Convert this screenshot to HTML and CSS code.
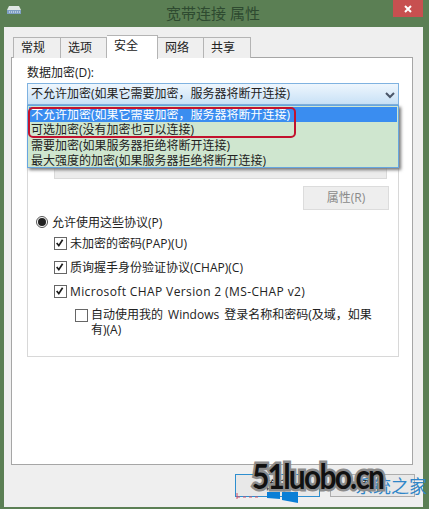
FILE: index.html
```html
<!DOCTYPE html>
<html lang="zh-CN">
<head>
    <meta charset="UTF-8">
    <title>宽带连接 属性</title>
    <link rel="stylesheet" href="styles.css">
</head>
<body>
<div class="window">
    <div class="titlebar">
        <svg class="app_icon" width="16" height="10" viewBox="0 0 16 10">
            <path d="M3 1h10l2 4H1z" fill="#dfe8e4"/>
            <rect x="1" y="5" width="14" height="4" fill="#7f9fc4"/>
            <path d="M3 7h1M5 7h1M7 7h1M9 7h1M11 7h1M13 7h1" stroke="#f4f6f8" stroke-width="1"/>
        </svg>
        <div class="title">宽带连接 属性</div>
        <div class="close">
            <svg width="10" height="10" viewBox="0 0 10 10"><path d="M2 2l6 6M8 2l-6 6" stroke="#fff" stroke-width="2"/></svg>
        </div>
    </div>
    <div class="client">
        <ul class="tab">
            <li class="w48">常规</li>
            <li class="w46">选项</li>
            <li class="active">安全</li>
            <li class="w46">网络</li>
            <li class="w47">共享</li>
        </ul>
        <div class="panel">
            <div class="label">数据加密(D):</div>
            <div class="select">
                <span>不允许加密(如果它需要加密，服务器将断开连接)</span>
                <svg class="chevron" width="10" height="7" viewBox="0 0 10 7"><path d="M1 1l4 4 4-4" fill="none" stroke="#4a5668" stroke-width="2"/></svg>
                <ul class="droplist">
                    <li class="on">不允许加密(如果它需要加密，服务器将断开连接)</li>
                    <li>可选加密(没有加密也可以连接)</li>
                    <li>需要加密(如果服务器拒绝将断开连接)</li>
                    <li>最大强度的加密(如果服务器拒绝将断开连接)</li>
                    <li class="ring"></li>
                </ul>
            </div>
            <div class="group">
                <div class="select_off"></div>
                <div class="btn_row"><div class="btn_off">属性(R)</div></div>
                <div class="radio_row">
                    <span class="radio"><i></i></span>
                    <span>允许使用这些协议(P)</span>
                </div>
                <div class="check_row">
                    <svg class="check" width="13" height="13" viewBox="0 0 13 13"><path d="M2 6l2.5 3L9 2" fill="none" stroke="#1c1c1c" stroke-width="2"/></svg>
                    <span>未加密的密码(PAP)(U)</span>
                </div>
                <div class="check_row">
                    <svg class="check" width="13" height="13" viewBox="0 0 13 13"><path d="M2 6l2.5 3L9 2" fill="none" stroke="#1c1c1c" stroke-width="2"/></svg>
                    <span>质询握手身份验证协议(CHAP)(C)</span>
                </div>
                <div class="check_row">
                    <svg class="check" width="13" height="13" viewBox="0 0 13 13"><path d="M2 6l2.5 3L9 2" fill="none" stroke="#1c1c1c" stroke-width="2"/></svg>
                    <span class="latin">Microsoft CHAP Version 2 (MS-CHAP v2)</span>
                </div>
                <div class="check_row sub">
                    <span class="check"></span>
                    <span class="sub_text">自动使用我的 Windows 登录名称和密码(及域，如果有)(A)</span>
                </div>
            </div>
        </div>
        <div class="footer">
            <div class="btn primary">确定</div>
            <div class="btn">取消</div>
        </div>
    </div>
    <div class="site_mark">系统之家</div>
    <svg class="win_logo" width="32" height="12" viewBox="0 0 32 12">
        <path d="M0 0h13v7l-13-1z" fill="#0a7fd6"/>
        <path d="M15 0h16v11l-16-3z" fill="#0a7fd6"/>
    </svg>
    <svg class="red_marks" width="24" height="7" viewBox="0 0 24 7">
        <path d="M1 0v6M1 4h3M7 4h3M13 4h3M19 4h3" fill="none" stroke="#d0506a" stroke-width="1"/>
    </svg>
    <div class="watermark">51luobo.cn</div>
</div>
</body>
</html>
```

FILE: styles.css
```css
* {
    margin: 0;
    padding: 0;
    box-sizing: border-box;
}
ul, li {
    list-style: none;
}
body {
    width: 429px;
    height: 509px;
    overflow: hidden;
    background: #5b7f54;
    font-family: "Open Sans", "Noto Sans CJK SC", sans-serif;
    font-size: 12px;
    color: #222;
}
.latin {
    letter-spacing: .38px;
}
.window {
    position: relative;
    height: 509px;
    padding: 0 6px 2px 4px;
    display: flex;
    flex-direction: column;
}
.titlebar {
    height: 27px;
    flex: none;
    display: flex;
    position: relative;
}
.app_icon {
    margin: 5px 0 0 2px;
}
.title {
    position: absolute;
    left: 162px;
    top: 3px;
    font-size: 15px;
    line-height: 20px;
    color: #2e4a30;
}
.close {
    position: absolute;
    right: 0;
    top: 0;
    width: 30px;
    height: 17px;
    background: #c75050;
    display: flex;
    align-items: center;
    justify-content: center;
}
.client {
    flex: 1;
    background: #efefef;
    padding: 8px 10px 0 7px;
    display: flex;
    flex-direction: column;
}
.tab {
    height: 23px;
    display: flex;
    align-items: flex-end;
    padding-left: 2px;
    position: relative;
    z-index: 1;
    margin-bottom: -1px;
}
.tab li {
    height: 21px;
    line-height: 19px;
    padding-left: 7px;
    background: #efefef;
    border: 1px solid #b4b4b4;
    border-bottom: none;
    border-left: none;
}
.tab li:first-child {
    border-left: 1px solid #b4b4b4;
}
.tab .w48 { width: 48px; }
.tab .w46 { width: 46px; }
.tab .w47 { width: 47px; }
.tab .active {
    width: 51px;
    height: 24px;
    line-height: 20px;
    background: #fff;
    margin-bottom: -1px;
}
.panel {
    height: 408px;
    background: #fff;
    border: 1px solid #a6a6a6;
    padding: 6px 13px 0 15px;
}
.label {
    line-height: 17px;
    margin-bottom: 2px;
}
.select {
    position: relative;
    height: 22px;
    padding-left: 3px;
    line-height: 20px;
    border: 1px solid #7fb2e0;
    background: linear-gradient(#eef6fd, #c8e1f6);
}
.chevron {
    position: absolute;
    right: 3px;
    top: 8px;
}
.droplist {
    position: absolute;
    z-index: 2;
    left: -1px;
    right: -1px;
    top: 21px;
    height: 63px;
    padding: 1px;
    background: #cfe6cf;
    border: 1px solid #66a6e0;
    box-shadow: 2px 2px 3px #777;
}
.droplist li {
    height: 15.25px;
    line-height: 15px;
    padding-left: 2px;
}
.droplist .on {
    background: #3a8df0;
    color: #fff;
}
.droplist .ring {
    position: absolute;
    left: 0;
    top: 1px;
    width: 268px;
    height: 31px;
    padding: 0;
    border: 2px solid #c2122e;
    border-radius: 5px;
}
.group {
    height: 244px;
    margin-top: 8px;
    padding: 0 10px 0 8px;
    border: 1px solid #d8d8d8;
}
.select_off {
    height: 21px;
    margin: 44px 1px 0 18px;
    background: #ececec;
    border: 1px solid #dadada;
}
.btn_row {
    display: flex;
    justify-content: flex-end;
    margin: 7px -1px 0 0;
}
.btn_off {
    width: 86px;
    height: 24px;
    line-height: 22px;
    text-align: center;
    color: #8a8a8a;
    background: #eee;
    border: 1px solid #dcdcdc;
}
.radio_row {
    display: flex;
    align-items: center;
    gap: 4px;
    height: 16px;
    margin-top: 4px;
}
.radio {
    width: 12px;
    height: 12px;
    border: 1px solid #555;
    border-radius: 50%;
    display: flex;
    align-items: center;
    justify-content: center;
}
.radio i {
    width: 8px;
    height: 8px;
    border-radius: 50%;
    background: #222;
}
.check_row {
    display: flex;
    align-items: center;
    gap: 3px;
    height: 16px;
    margin: 8px 0 0 18px;
}
.radio_row + .check_row {
    margin-top: 5px;
}
.check {
    flex: none;
    width: 13px;
    height: 13px;
    background: #fff;
    border: 1px solid #666;
}
.check_row.sub {
    align-items: flex-start;
    height: 30px;
    margin-left: 39px;
    margin-right: 14px;
    line-height: 15px;
}
.sub .check {
    margin-top: 2px;
}
.sub_text {
    word-spacing: 2px;
}
.footer {
    display: flex;
    justify-content: flex-end;
    gap: 10px;
    margin-top: 9px;
    margin-right: -2px;
}
.btn {
    width: 85px;
    height: 23px;
    line-height: 21px;
    text-align: center;
    background: #e8e8e8;
    border: 1px solid #adadad;
}
.btn.primary {
    border-color: #2d8ecf;
}
.site_mark {
    position: absolute;
    right: 2px;
    top: 474px;
    font-size: 18px;
    line-height: 24px;
    color: #2f86c8;
}
.win_logo {
    position: absolute;
    left: 267px;
    top: 492px;
}
.red_marks {
    position: absolute;
    left: 236px;
    top: 493px;
}
.watermark {
    position: absolute;
    left: 252px;
    top: 453px;
    font-family: Lato, sans-serif;
    font-size: 34px;
    font-weight: 700;
    line-height: 46px;
    letter-spacing: -2px;
    color: #111;
    -webkit-text-stroke: 5px #8c8c8c;
    paint-order: stroke fill;
    transform: scaleX(.88);
    transform-origin: left center;
}
```
